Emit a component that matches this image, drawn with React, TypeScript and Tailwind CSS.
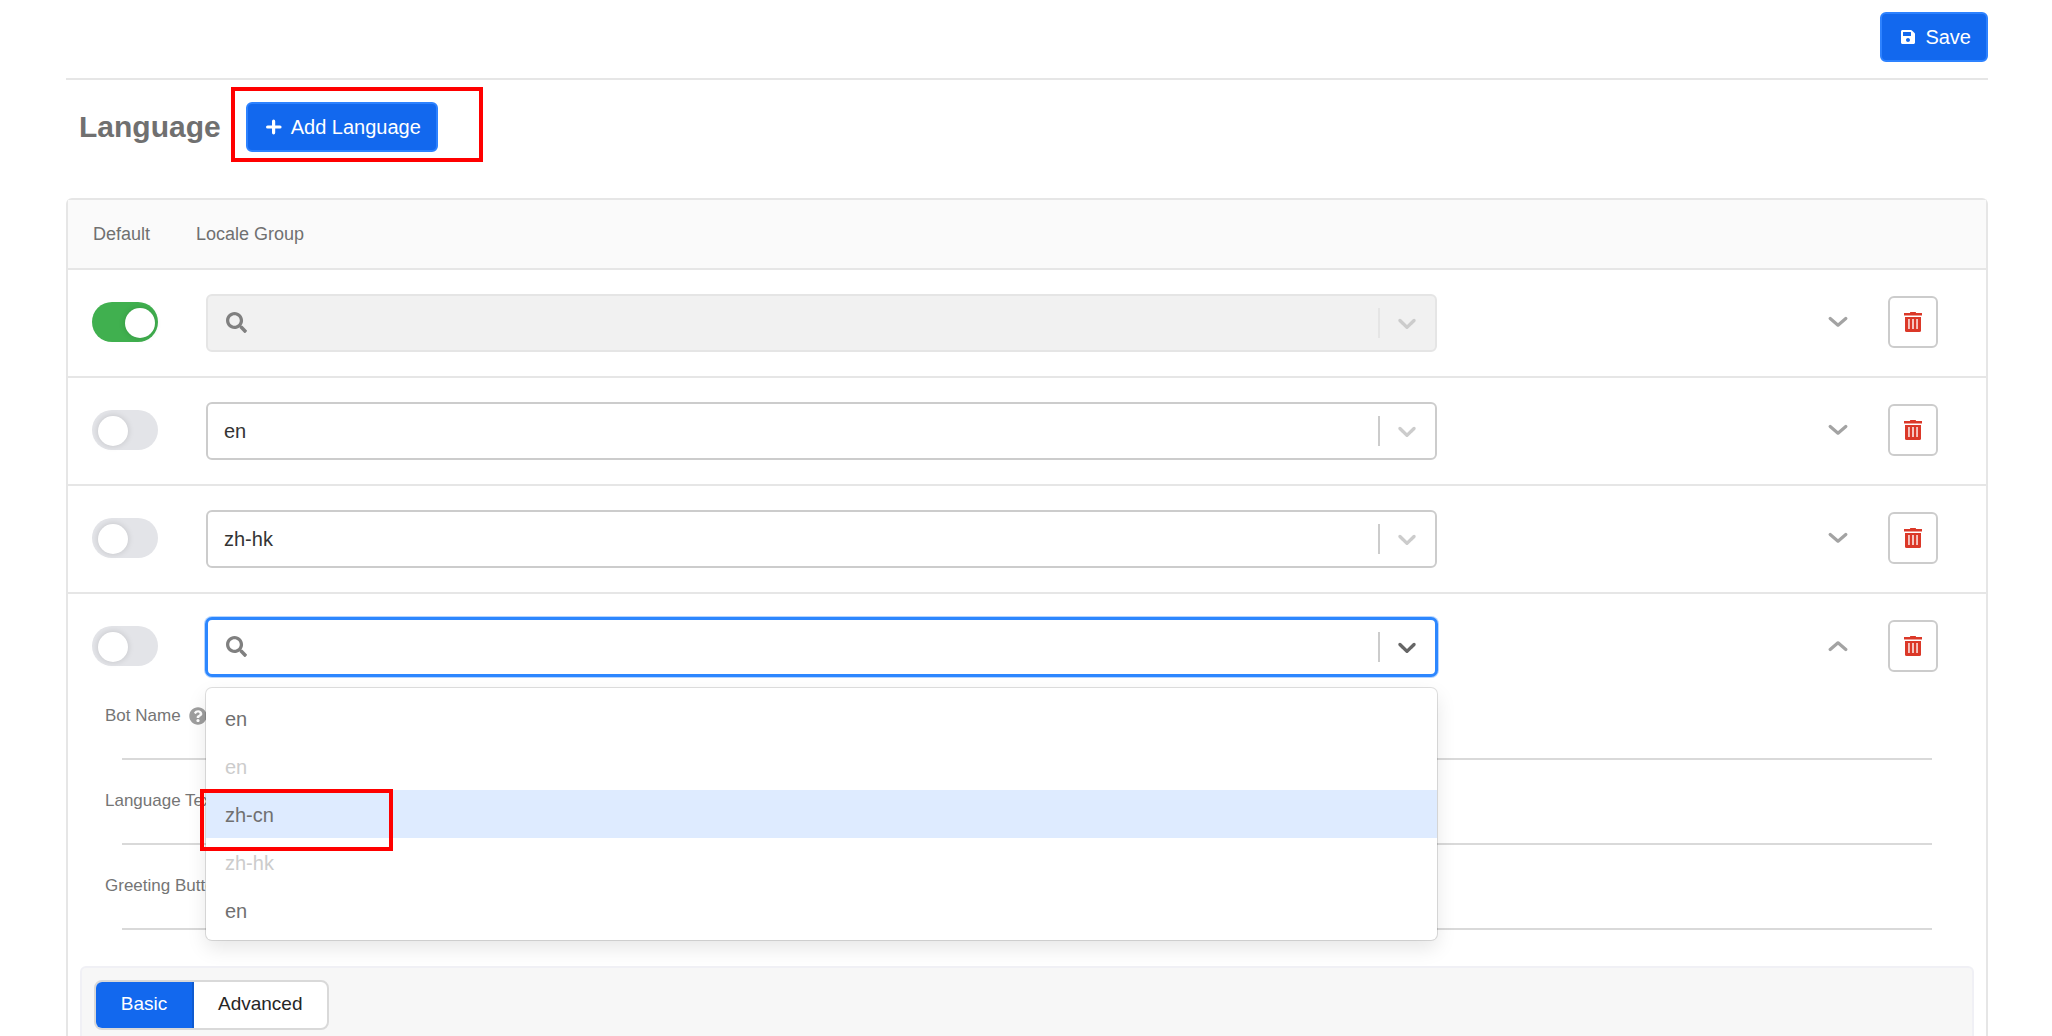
import React, { useState } from 'react';
import { FaQuestionCircle, FaSave, FaSearch } from 'react-icons/fa';

interface Locale {
  id: number;
  value: string;
  isDefault?: boolean;
  isOpen?: boolean;
}

const LOCALES: Locale[] = [
  { id: 1, value: '', isDefault: true },
  { id: 2, value: 'en' },
  { id: 3, value: 'zh-hk' },
  { id: 4, value: '', isOpen: true },
];

const OPTIONS = [
  { label: 'en' },
  { label: 'en', disabled: true },
  { label: 'zh-cn', active: true },
  { label: 'zh-hk', disabled: true },
  { label: 'en' },
];

const FIELDS = [
  { id: 'bot-name', label: 'Bot Name', help: true },
  { id: 'language-text', label: 'Language Text' },
  { id: 'greeting-button', label: 'Greeting Button' },
];

const PlusIcon = () => (
  <svg viewBox="0 0 16 16" className="size-4" fill="none" stroke="currentColor" strokeWidth="3.2" strokeLinecap="round">
    <path d="M7.600 2.200v11.600M1.600 8h12.400" />
  </svg>
);

const CaretIcon = ({ className }: { className: string }) => (
  <svg viewBox="0 0 20 20" className={`size-[30px] shrink-0 ${className}`} fill="currentColor">
    <path d="M4.516 7.548c.436-.446 1.043-.481 1.576 0L10 11.295l3.908-3.747c.533-.481 1.141-.446 1.574 0 .436.445.408 1.197 0 1.615-.406.418-4.695 4.502-4.695 4.502a1.095 1.095 0 0 1-1.576 0S4.924 9.581 4.516 9.163s-.436-1.17 0-1.615z" />
  </svg>
);

const ExpandIcon = ({ up }: { up?: boolean }) => (
  <svg viewBox="0 0 20 12" className="h-3 w-5" fill="none" stroke="currentColor" strokeWidth="3.2" strokeLinecap="round" strokeLinejoin="round">
    <path d={up ? 'M2.2 9.5 10 2.8l7.8 6.7' : 'M2.2 2.5 10 9.2l7.8-6.7'} />
  </svg>
);

const TrashIcon = () => (
  <svg viewBox="0 0 18 20" className="h-5 w-[18px]">
    <path d="M6 1V.6Q6 0 6.600 0h4.800q.6 0 .6.6V1h6v2.600H0V1z" fill="#db3828" />
    <path d="M1 5h16v13.500q0 1.500-1.500 1.500h-13Q1 20 1 18.500z" fill="#db3828" />
    <path d="M4 7h1.900v10H4zM8 7h2v10H8zM12.100 7H14v10h-1.900z" fill="#f5c4be" />
  </svg>
);

const Toggle = ({ checked, onChange }: { checked: boolean; onChange: () => void }) => (
  <input
    type="checkbox"
    role="switch"
    aria-label="Default"
    checked={checked}
    onChange={onChange}
    className="relative mb-0.5 h-10 w-[66px] shrink-0 cursor-pointer appearance-none rounded-full bg-[#e3e4e8] before:absolute before:top-1.5 before:left-1.5 before:size-[30px] before:rounded-full before:bg-white before:shadow-[0_0_6px_rgba(0,0,0,0.15)] checked:bg-[#40b04f] checked:before:left-[33px]"
  />
);

const OptionMenu = () => (
  <ul
    id="locale-options"
    role="listbox"
    className="absolute top-full left-0 z-10 mt-3.5 -ml-0.5 w-[calc(100%+4px)] rounded-md bg-white py-1.5 text-xl text-[#707070] shadow-[0_0_0_1px_rgba(0,0,0,0.12),0_8px_20px_rgba(0,0,0,0.1)]"
  >
    {OPTIONS.map((option, i) => (
      <li
        key={i}
        role="option"
        aria-selected={!!option.active}
        aria-disabled={option.disabled}
        className={`relative flex h-12 items-center px-[19px] pt-0.5 ${option.disabled ? 'text-[#cccccc]' : ''} ${option.active ? 'bg-[#deebff]' : ''}`}
      >
        {option.label}
        {option.active && (
          <span className="absolute -top-px -left-1.5 z-20 h-[62px] w-[193px] border-4 border-[#ff0000]" />
        )}
      </li>
    ))}
  </ul>
);

const LocaleSelect = ({ locale }: { locale: Locale }) => {
  const { value, isDefault, isOpen } = locale;
  let frame = 'border-[#cccccc] bg-white';
  if (isDefault) frame = 'border-[#e5e5e5] bg-[#f1f1f1]';
  if (isOpen) frame = 'border-[#2d87ff] bg-white shadow-[0_0_0_1px_#2d87ff,0_0_0_2px_#b5d5ff]';

  return (
    <div className={`relative flex h-[58px] w-2/3 items-center rounded-md border-2 text-xl text-[#333333] ${frame}`}>
      {value ? (
        <select aria-label="Locale Group" defaultValue={value} className="h-full flex-1 appearance-none px-4 outline-none">
          <option>{value}</option>
        </select>
      ) : (
        <>
          <FaSearch className="mb-0.5 ml-[18px] size-[21px] shrink-0 text-[#808080]" />
          <input
            type="text"
            role="combobox"
            aria-label="Locale Group"
            aria-expanded={!!isOpen}
            aria-controls="locale-options"
            disabled={isDefault}
            className="h-full min-w-0 flex-1 px-2 outline-none"
          />
        </>
      )}
      <span className={`h-[30px] w-0.5 ${isDefault ? 'bg-[#e5e5e5]' : 'bg-[#cccccc]'}`} />
      <CaretIcon className={`mr-[13px] ml-3 ${isOpen ? 'text-[#666666]' : 'text-[#cccccc]'}`} />
      {isOpen && <OptionMenu />}
    </div>
  );
};

const LocaleDetails = () => {
  const [tab, setTab] = useState('Basic');

  return (
    <div className="flex flex-1 flex-col">
      <div className="flex flex-col gap-[29px] pt-1 pr-[54px] pl-[37px]">
        {FIELDS.map((field) => (
          <div key={field.id}>
            <div className="flex h-6 items-center gap-2 text-[17px] text-[#757575]">
              <label htmlFor={field.id}>{field.label}</label>
              {field.help && <FaQuestionCircle className="size-[18px] text-[#9e9e9e]" />}
            </div>
            <div className="flex pl-[17px]">
              <input id={field.id} type="text" className="h-8 flex-1 border-b-2 border-[#d9d9d9] outline-none" />
            </div>
          </div>
        ))}
      </div>

      <div className="mx-3 mt-9 flex flex-1 items-start rounded-t-md border-2 border-b-0 border-[#f0f0f5] bg-[#f7f7f7] px-3 pt-3 pb-1.5">
        <div className="flex h-[50px] overflow-hidden rounded-lg border-2 border-[#d9d9d9] bg-white text-[19px]">
          {['Basic', 'Advanced'].map((name) => (
            <button
              key={name}
              onClick={() => setTab(name)}
              className={`min-w-[98px] px-6 pb-0.5 ${tab === name ? 'border-r-2 border-[#0f5bd0] bg-[#1268ee] text-white' : 'text-[#262626]'}`}
            >
              {name}
            </button>
          ))}
        </div>
      </div>
    </div>
  );
};

export default function App() {
  const [defaultId, setDefaultId] = useState(1);

  return (
    <div className="flex min-h-screen flex-col bg-white pr-16 pl-[66px] font-['Liberation_Sans',Arial,sans-serif]">
      <header className="flex justify-end border-b-2 border-[#e6e6e6] pt-3 pb-4">
        <button className="flex h-[50px] items-center gap-[9px] rounded-md border-2 border-[#2d82ff] bg-[#1268ee] pr-[15px] pl-[18px] text-xl text-white">
          <FaSave className="size-4" />
          Save
        </button>
      </header>

      <div className="flex items-center gap-[25px] pt-[22px] pb-[46px] pl-[13px]">
        <h1 className="text-3xl font-bold text-[#707070]">Language</h1>
        <div className="relative">
          <button className="flex h-[50px] items-center gap-[9px] rounded-md border-2 border-[#2d82ff] bg-[#1268ee] pr-[15px] pl-[18px] text-xl text-white">
            <PlusIcon />
            Add Language
          </button>
          <span className="pointer-events-none absolute -top-[15px] -right-[45px] -bottom-[10px] -left-[15px] border-4 border-[#ff0000]" />
        </div>
      </div>

      <section className="flex flex-1 flex-col rounded-t-md border-2 border-b-0 border-[#e6e6e6]">
        <div className="flex h-[70px] items-center border-b-2 border-[#e6e6e6] bg-[#fafafa] pl-[25px] text-lg text-[#707070]">
          <span className="w-[103px]">Default</span>
          <span>Locale Group</span>
        </div>

        {LOCALES.map((locale) => (
          <div
            key={locale.id}
            className={locale.isOpen ? 'flex flex-1 flex-col' : 'border-b-2 border-[#e6e6e6]'}
          >
            <div className="flex items-center py-6 pr-12 pl-6">
              <Toggle checked={defaultId === locale.id} onChange={() => setDefaultId(locale.id)} />
              <div className="w-12 shrink-0" />
              <LocaleSelect locale={locale} />
              <div className="mb-0.5 ml-auto flex items-center gap-10">
                <button aria-label={locale.isOpen ? 'Collapse' : 'Expand'} className="text-[#a3a3a3]">
                  <ExpandIcon up={locale.isOpen} />
                </button>
                <button
                  aria-label="Delete language"
                  className="flex h-[52px] w-[50px] items-center justify-center rounded-md border-2 border-[#cccccc] bg-white"
                >
                  <TrashIcon />
                </button>
              </div>
            </div>
            {locale.isOpen && <LocaleDetails />}
          </div>
        ))}
      </section>
    </div>
  );
}
